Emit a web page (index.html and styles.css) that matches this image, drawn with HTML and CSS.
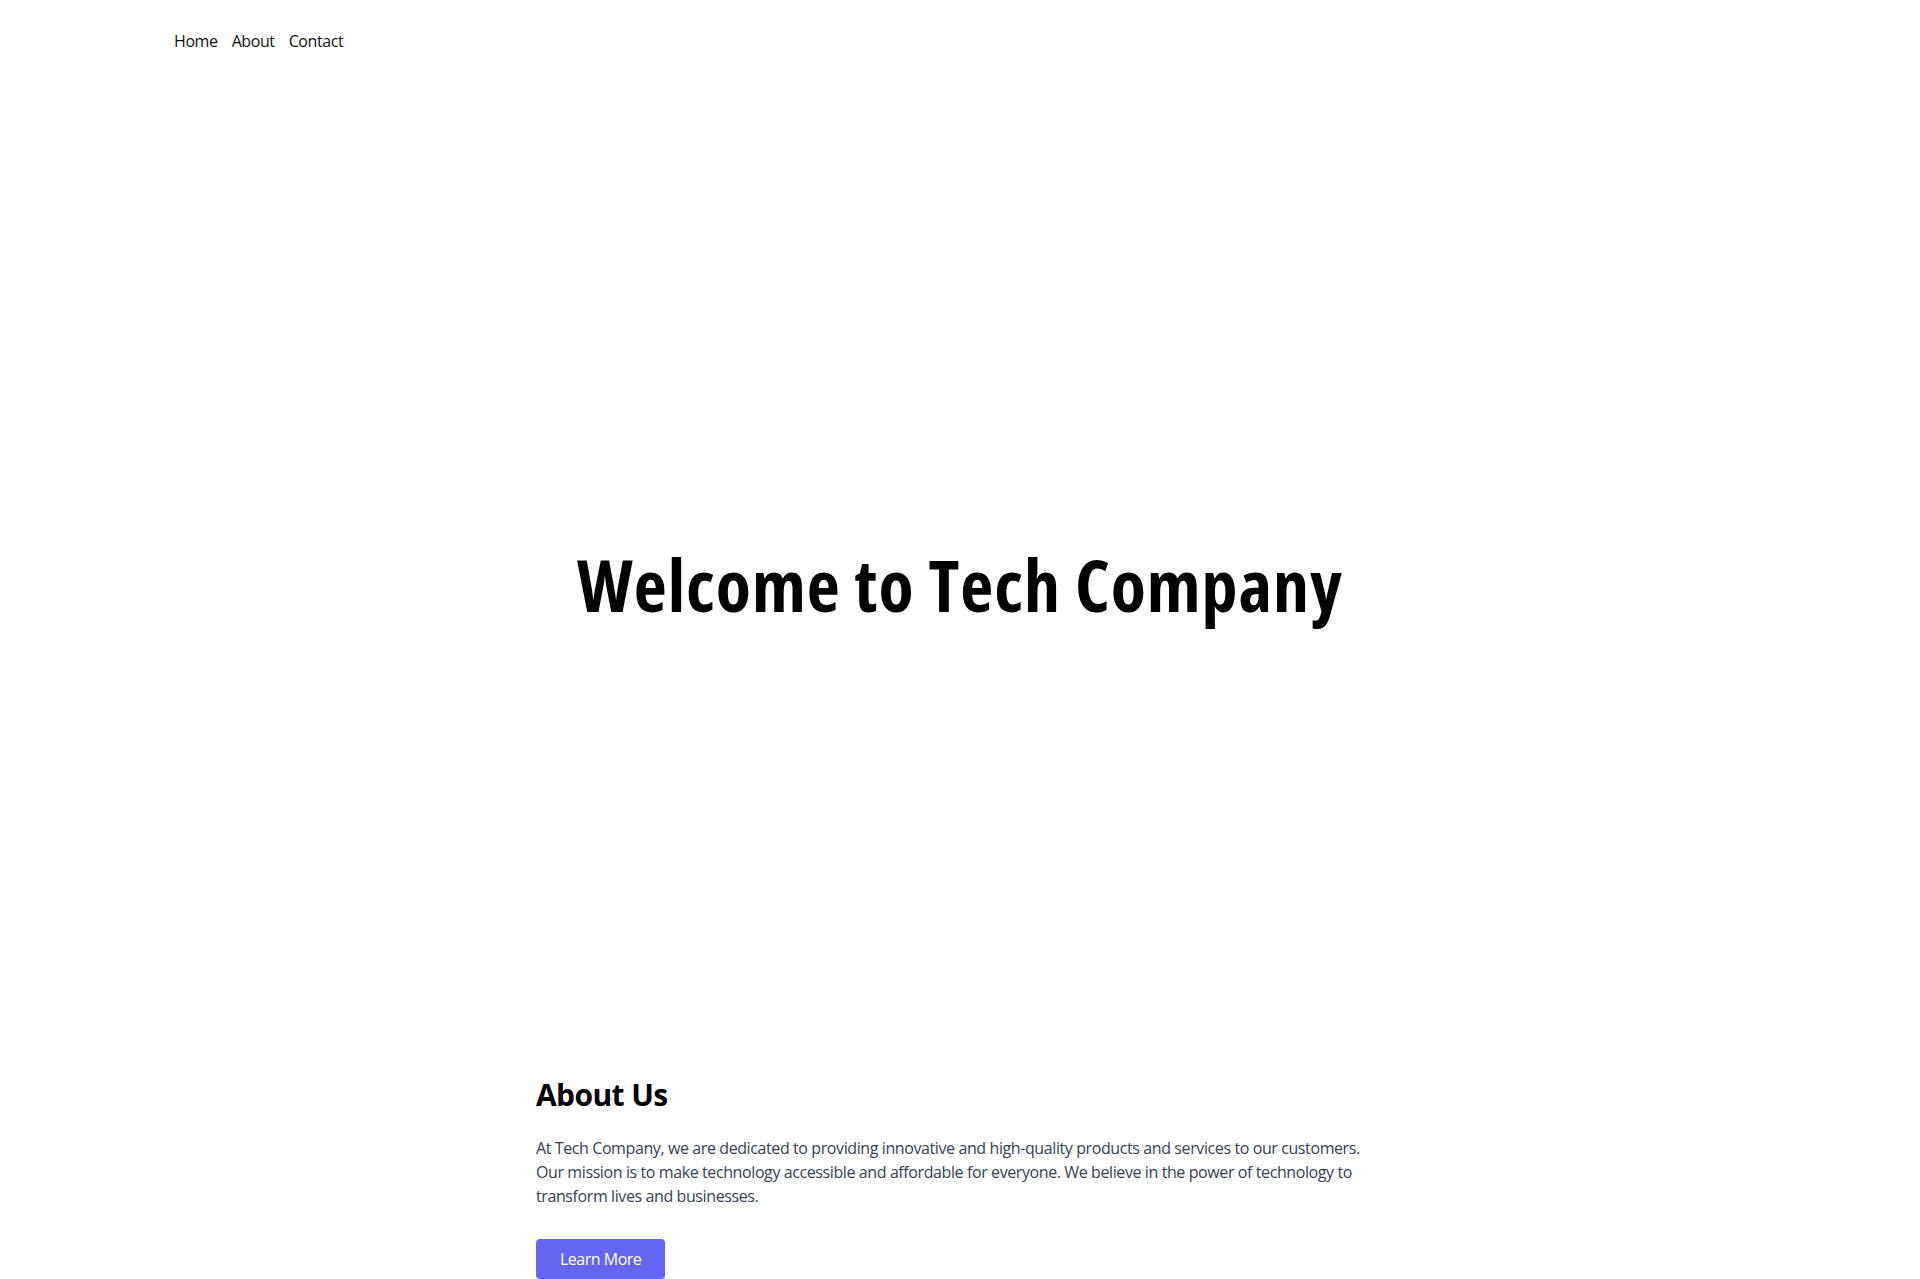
FILE: index.html
```html
<!DOCTYPE html>
<html lang="en">
<head>
<meta charset="utf-8">
<title>Tech Company</title>
<link rel="stylesheet" href="styles.css">
</head>
<body>
<nav class="nav">
  <ul class="nav-list">
    <li><a class="nav-link" href="#">Home</a></li>
    <li><a class="nav-link" href="#">About</a></li>
    <li><a class="nav-link" href="#">Contact</a></li>
  </ul>
</nav>
<section class="hero">
  <h1 class="hero-title">Welcome to Tech Company</h1>
</section>
<section class="about">
  <h2 class="about-title">About Us</h2>
  <p class="about-text">At Tech Company, we are dedicated to providing innovative and high-quality products and services to our customers. Our mission is to make technology accessible and affordable for everyone. We believe in the power of technology to transform lives and businesses.</p>
  <a class="btn" href="#">Learn More</a>
</section>
</body>
</html>
```
FILE: styles.css
```css
* { box-sizing: border-box; }
html, body { margin: 0; padding: 0; background: #fff; }
body {
  font-family: "Open Sans", "Noto Sans", sans-serif;
  color: #000;
  font-size: 16px;
  line-height: 24px;
}
.nav { padding: 29px 0 0 167px; }
.nav-list { list-style: none; margin: 0; padding: 0; display: flex; }
.nav-link {
  display: block;
  padding: 0 7px;
  color: #111;
  text-decoration: none;
  font-size: 16px;
  line-height: 24px;
  letter-spacing: -0.4px;
}
.hero {
  padding: 495px 0 393px;
  display: flex;
  justify-content: center;
}
.hero-title {
  margin: 0;
  font-size: 72px;
  line-height: 72px;
  font-weight: 700;
  font-stretch: 75%;
  letter-spacing: 1px;
  color: #000;
}
.about {
  width: 848px;
  margin: 0 auto;
  padding-top: 64px;
}
.about-title {
  margin: 0 0 23px;
  font-size: 30px;
  line-height: 36px;
  font-weight: 700;
  letter-spacing: -0.6px;
  color: #000;
}
.about-text {
  margin: 0 0 31px;
  color: #374151;
  font-size: 16px;
  line-height: 24px;
  letter-spacing: -0.4px;
}
.btn {
  display: inline-block;
  padding: 8px 24px;
  background: #6366f1;
  color: #fff;
  text-decoration: none;
  border-radius: 4px;
  font-size: 16px;
  line-height: 24px;
  letter-spacing: -0.5px;
}
```
